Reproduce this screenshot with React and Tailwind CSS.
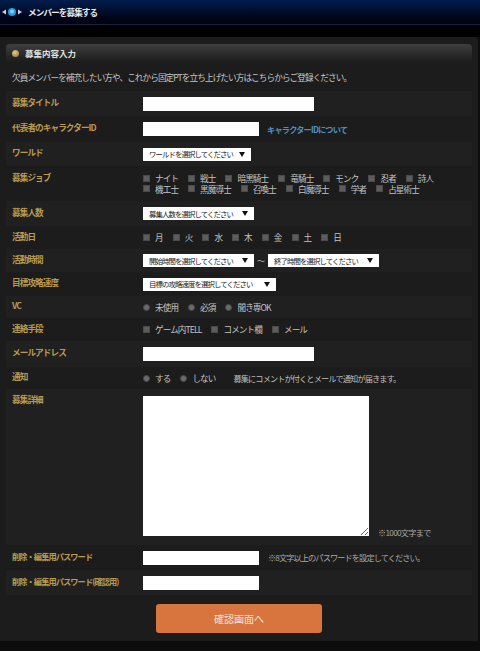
const jobs = ['ナイト', '戦士', '暗黒騎士', '竜騎士', 'モンク', '忍者', '詩人', '機工士', '黒魔導士', '召喚士', '白魔導士', '学者', '占星術士']
const days = ['月', '火', '水', '木', '金', '土', '日']

function Row({ label, light, className = 'h-[24px] items-center', labelClass = 'text-[8.6px] tracking-[-0.9px] pb-[3px]', children }) {
  return (
    <div className={`flex ${light ? 'bg-[#202020]' : ''} ${className}`}>
      <div className={`w-[137px] shrink-0 pl-[6px] font-bold text-[#b89b50] ${labelClass}`}>{label}</div>
      <div className="flex min-w-0 flex-1 items-center">{children}</div>
    </div>
  )
}

function Check({ label }) {
  return (
    <label className="flex items-center gap-[5px] text-[8.6px] tracking-[-0.9px] text-[#c2c2c2]">
      <span className="h-[7px] w-[7px] border border-[#4a4a4a] bg-[#5c5c5c]" />
      {label}
    </label>
  )
}

function Radio({ label }) {
  return (
    <label className="flex items-center gap-[5px] text-[8.6px] tracking-[-0.9px] text-[#c2c2c2]">
      <span className="h-[7px] w-[7px] rounded-full border border-[#4a4a4a] bg-[#6a6a6a]" />
      {label}
    </label>
  )
}

function Select({ label, width }) {
  return (
    <div className={`flex h-[13px] items-center justify-between whitespace-nowrap bg-white px-[6px] text-[7.4px] tracking-[-0.9px] text-[#222] ${width}`}>
      <span>{label}</span>
      <span className="h-0 w-0 border-x-[3px] border-t-[5px] border-x-transparent border-t-[#111]" />
    </div>
  )
}

export default function App() {
  return (
    <div className="h-[651px] w-[480px] overflow-hidden bg-[#0d0d0d] font-['Noto_Sans_CJK_JP',sans-serif] leading-none">
      <div className="h-[37px] bg-gradient-to-b from-[#011d4d] to-[#000000]">
        <div className="flex h-[25px] items-center border-b border-[#1c1f40] pl-[2px]">
          <svg width="20" height="10" viewBox="0 0 20 10">
            <polygon points="0,5 4,2.5 4,7.5" fill="#c8d4e0" />
            <polygon points="20,5 16,2.5 16,7.5" fill="#c8d4e0" />
            <circle cx="10" cy="5" r="4" fill="#2a9ad8" />
            <circle cx="10" cy="4.4" r="2" fill="#7fd0f5" />
          </svg>
          <span className="ml-[6px] text-[8.6px] font-bold tracking-[-0.9px] text-[#e8e8e8]">メンバーを募集する</span>
        </div>
      </div>

      <div className="h-[604px] w-[478px] rounded-tr-[3px] bg-[#1c1c1c] px-[6px] pt-[7px]">
        <div className="flex h-[18px] items-center rounded-t-[4px] bg-gradient-to-b from-[#3f3f3f] to-[#1c1c1c] pl-[6px]">
          <span className="h-[7px] w-[7px] rounded-full bg-[radial-gradient(circle_at_40%_35%,#e0cc88,#8a7030)]" />
          <span className="ml-[6px] text-[8.5px] font-bold text-[#e0e0e0]">募集内容入力</span>
        </div>
        <p className="mt-[11px] h-[18px] pl-[6px] text-[8.6px] tracking-[-0.9px] text-[#c4c4c4]">
          欠員メンバーを補充したい方や、これから固定PTを立ち上げたい方はこちらからご登録ください。
        </p>

        <Row label="募集タイトル" light className="h-[25px] items-center">
          <input className="h-[14px] w-[171px] bg-white" />
        </Row>
        <Row label="代表者のキャラクターID" className="h-[26px] items-center">
          <input className="h-[14px] w-[116px] bg-white" />
          <a className="ml-[8px] text-[8.2px] font-bold tracking-[-0.8px] text-[#4f8fc4]">キャラクターIDについて</a>
        </Row>
        <Row label="ワールド" light>
          <Select label="ワールドを選択してください" width="w-[108px]" />
        </Row>
        <Row label="募集ジョブ" className="h-[35px] items-center" labelClass="text-[8.6px] tracking-[-0.9px] pb-[13px]">
          <div className="flex w-[320px] flex-wrap gap-x-[10px] gap-y-[2px]">
            {jobs.map((j) => <Check key={j} label={j} />)}
          </div>
        </Row>
        <Row label="募集人数" light className="h-[25px] items-center">
          <Select label="募集人数を選択してください" width="w-[111px]" />
        </Row>
        <Row label="活動日" className="h-[23px] items-center">
          <div className="flex gap-x-[10px]">
            {days.map((d) => <Check key={d} label={d} />)}
          </div>
        </Row>
        <Row label="活動時間" light className="h-[23px] items-center">
          <Select label="開始時間を選択してください" width="w-[111px]" />
          <span className="mx-[3px] text-[8px] text-[#bdbdbd]">〜</span>
          <Select label="終了時間を選択してください" width="w-[111px]" />
        </Row>
        <Row label="目標攻略速度">
          <Select label="目標の攻略速度を選択してください" width="w-[133px]" />
        </Row>
        <Row label="VC" light className="h-[22px] items-center">
          <div className="flex gap-x-[10px]">
            <Radio label="未使用" />
            <Radio label="必須" />
            <Radio label="聞き専OK" />
          </div>
        </Row>
        <Row label="連絡手段" className="h-[23px] items-center">
          <div className="flex gap-x-[10px]">
            <Check label="ゲーム内TELL" />
            <Check label="コメント欄" />
            <Check label="メール" />
          </div>
        </Row>
        <Row label="メールアドレス" light className="h-[26px] items-center">
          <input className="h-[14px] w-[171px] bg-white" />
        </Row>
        <Row label="通知" className="h-[22px] items-center">
          <div className="flex gap-x-[10px]">
            <Radio label="する" />
            <Radio label="しない" />
          </div>
          <span className="ml-[18px] text-[8.2px] tracking-[-0.9px] text-[#bdbdbd]">募集にコメントが付くとメールで通知が届きます。</span>
        </Row>
        <Row label="募集詳細" light className="h-[156px] items-start pt-[6px]" labelClass="text-[8.6px] tracking-[-0.9px]">
          <textarea className="h-[140px] w-[226px] resize-y bg-white" />
          <span className="ml-[9px] mt-[133px] text-[8.2px] tracking-[-0.7px] text-[#a8a8a8]">※1000文字まで</span>
        </Row>
        <Row label="削除・編集用パスワード" className="h-[25px] items-center" labelClass="text-[8.2px] tracking-[-0.9px] pb-[3px]">
          <input className="h-[14px] w-[116px] bg-white" />
          <span className="ml-[9px] text-[8.2px] tracking-[-0.9px] text-[#a8a8a8]">※8文字以上のパスワードを設定してください。</span>
        </Row>
        <Row label="削除・編集用パスワード(確認用)" light className="h-[25px] items-center" labelClass="text-[8.2px] tracking-[-0.9px] pb-[3px]">
          <input className="h-[14px] w-[116px] bg-white" />
        </Row>

        <div className="mt-[9px] flex justify-center">
          <button className="h-[29px] w-[166px] rounded-[3px] bg-[#d8743e] text-[10px] text-[#f4e4d8]">確認画面へ</button>
        </div>
      </div>
    </div>
  )
}
